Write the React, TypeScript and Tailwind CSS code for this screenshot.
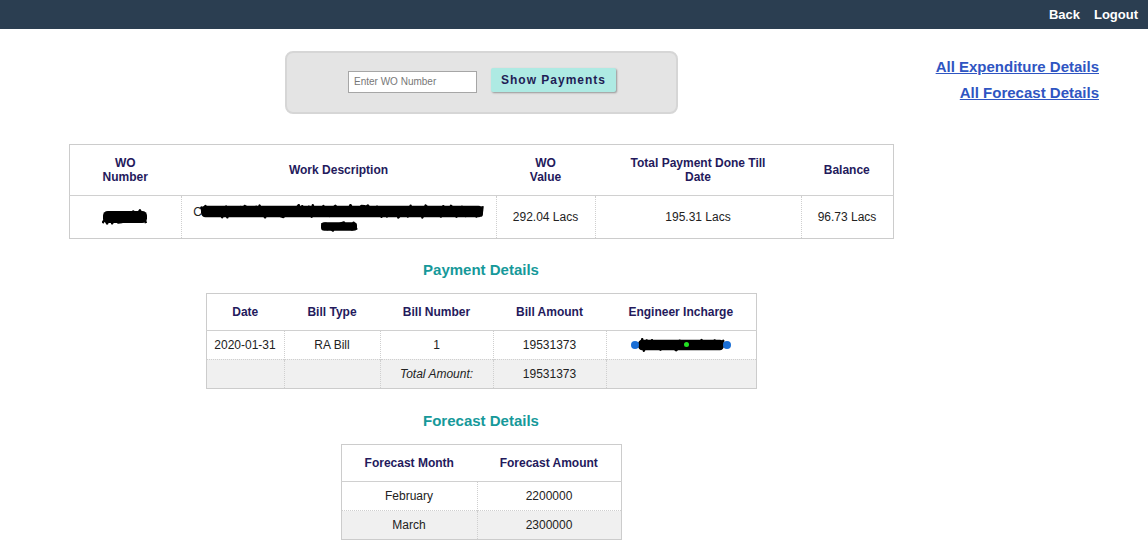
import React from "react";

function Scribble({ w, h, seed = 1, dense = 1 }: { w: number; h: number; seed?: number; dense?: number }) {
  let s = seed * 9301 + 49297;
  const rnd = () => {
    s = (s * 9301 + 49297) % 233280;
    return s / 233280;
  };
  const pts: string[] = [];
  const n = Math.floor((w / 2.2) * dense);
  for (let i = 0; i < n; i++) {
    const x = (i / n) * w + rnd() * 2;
    const y = 1 + rnd() * (h - 2);
    pts.push(`${x.toFixed(1)},${y.toFixed(1)}`);
  }
  return (
    <svg width={w} height={h} viewBox={`0 0 ${w} ${h}`} className="block">
      <rect x={1} y={h * 0.12} width={w - 2} height={h * 0.76} rx={h * 0.3} fill="#000" />
      <polyline points={pts.join(" ")} fill="none" stroke="#000" strokeWidth={2.4} strokeLinejoin="round" />
    </svg>
  );
}

const th = "font-bold text-[12px] leading-[14px] text-[#241a5c] text-center align-middle";
const td = "text-[12px] text-[#222] text-center align-middle border-l border-dotted border-[#cfcfcf] first:border-l-0";

export default function App() {
  return (
    <div className="w-[1148px] h-[546px] bg-white overflow-hidden" style={{ fontFamily: '"Liberation Sans", Arial, sans-serif' }}>
      <div className="h-[29px] bg-[#2b3e51] flex items-center justify-end pr-[10px] gap-[14px]">
        <span className="text-white font-bold text-[13px]">Back</span>
        <span className="text-white font-bold text-[13px]">Logout</span>
      </div>
      <div className="flex">
        <div className="w-[962px] shrink-0 flex flex-col items-center">
          <div className="mt-[22px] w-[393px] h-[63px] bg-[#e4e4e4] border-2 border-[#d6d6d6] rounded-[8px] flex items-center justify-center gap-[14px] pb-[2px] pl-[2px]">
            <div className="w-[129px] h-[22px] border border-[#a6a6a6] bg-white flex items-center px-[5px]">
              <span className="text-[10px] text-[#777]">Enter WO Number</span>
            </div>
            <div className="w-[125px] h-[24px] mb-[4px] bg-[#aeeae3] rounded-[2px] shadow-[1px_1px_2px_rgba(0,0,0,0.35)] flex items-center justify-center">
              <span className="font-bold text-[12px] tracking-[1px] text-[#1f1d55]">Show Payments</span>
            </div>
          </div>

          <table className="mt-[30px] w-[825px] border-collapse border border-[#cccccc]">
            <thead>
              <tr className="h-[51px] border-b border-[#d0d0d0]">
                <th className={`${th} w-[112px]`}>WO<br />Number</th>
                <th className={`${th} w-[315px]`}>Work Description</th>
                <th className={`${th} w-[99px]`}>WO<br />Value</th>
                <th className={`${th} w-[206px]`}>Total Payment Done Till<br />Date</th>
                <th className={`${th} w-[92px]`}>Balance</th>
              </tr>
            </thead>
            <tbody>
              <tr className="h-[43px]">
                <td className={td}>
                  <div className="flex justify-center"><Scribble w={46} h={16} seed={3} /></div>
                </td>
                <td className={td}>
                  <div className="flex flex-col items-center">
                    <div className="flex items-center">
                      <span className="text-[12px] text-[#222] -mr-[2px]">C</span>
                      <Scribble w={284} h={15} seed={7} />
                    </div>
                    <Scribble w={38} h={11} seed={11} />
                  </div>
                </td>
                <td className={td}>292.04 Lacs</td>
                <td className={td}>195.31 Lacs</td>
                <td className={td}>96.73 Lacs</td>
              </tr>
            </tbody>
          </table>

          <div className="mt-[20px] text-[15px] font-bold text-[#16999a]">Payment Details</div>

          <table className="mt-[11px] w-[551px] border-collapse border border-[#cccccc]">
            <thead>
              <tr className="h-[37px] border-b border-[#d0d0d0]">
                <th className={`${th} w-[78px]`}>Date</th>
                <th className={`${th} w-[96px]`}>Bill Type</th>
                <th className={`${th} w-[113px]`}>Bill Number</th>
                <th className={`${th} w-[113px]`}>Bill Amount</th>
                <th className={`${th} w-[150px]`}>Engineer Incharge</th>
              </tr>
            </thead>
            <tbody>
              <tr className="h-[29px]">
                <td className={td}>2020-01-31</td>
                <td className={td}>RA Bill</td>
                <td className={td}>1</td>
                <td className={td}>19531373</td>
                <td className={td}>
                  <div className="flex justify-center items-center relative">
                    <span className="w-[8px] h-[8px] rounded-full bg-[#1a6fd6] -mr-[2px] z-10" />
                    <Scribble w={88} h={14} seed={5} />
                    <span className="w-[8px] h-[8px] rounded-full bg-[#1a6fd6] -ml-[2px] z-10" />
                    <span className="absolute left-[77px] top-[4px] w-[5px] h-[5px] rounded-full bg-[#22e022]" />
                  </div>
                </td>
              </tr>
              <tr className="h-[29px] bg-[#f0f0f0] border-t border-dotted border-[#cfcfcf]">
                <td className={td}></td>
                <td className={td}></td>
                <td className={`${td} italic`}>Total Amount:</td>
                <td className={td}>19531373</td>
                <td className={td}></td>
              </tr>
            </tbody>
          </table>

          <div className="mt-[21px] text-[15px] font-bold text-[#16999a]">Forecast Details</div>

          <table className="mt-[12px] w-[281px] border-collapse border border-[#cccccc]">
            <thead>
              <tr className="h-[37px] border-b border-[#d0d0d0]">
                <th className={`${th} w-[136px]`}>Forecast Month</th>
                <th className={`${th} w-[144px]`}>Forecast Amount</th>
              </tr>
            </thead>
            <tbody>
              <tr className="h-[29px]">
                <td className={td}>February</td>
                <td className={td}>2200000</td>
              </tr>
              <tr className="h-[29px] bg-[#f0f0f0] border-t border-dotted border-[#cfcfcf]">
                <td className={td}>March</td>
                <td className={td}>2300000</td>
              </tr>
            </tbody>
          </table>
        </div>
        <div className="flex-1 min-w-0 flex flex-col items-end pr-[49px] pt-[29px] gap-[8px] whitespace-nowrap">
          <span className="font-bold text-[15px] leading-[18px] text-[#2f55c2] underline">All Expenditure Details</span>
          <span className="font-bold text-[15px] leading-[18px] text-[#2f55c2] underline">All Forecast Details</span>
        </div>
      </div>
    </div>
  );
}
